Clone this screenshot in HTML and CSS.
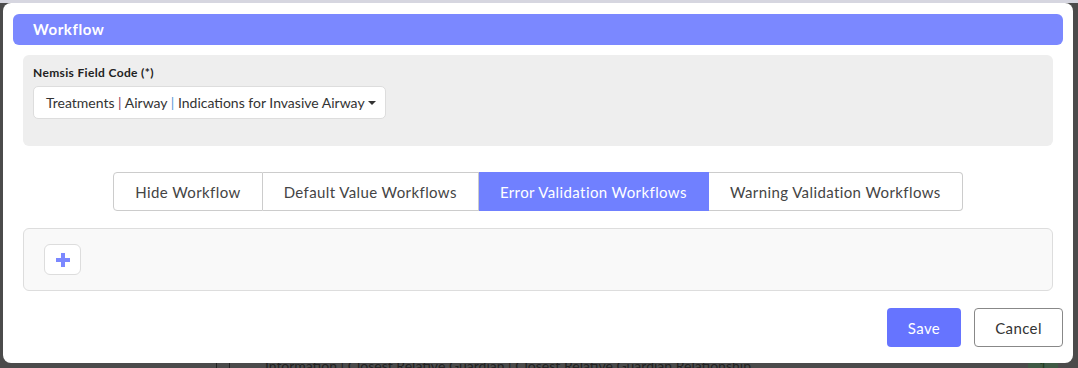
FILE: index.html
```html
<!DOCTYPE html>
<html>

<head>
    <title>Workflow</title>
    <link rel="stylesheet" href="styles.css">
</head>

<body>
    <div class="page">
        <div class="page-top"></div>
        <div class="page-rows">
            <div class="page-row">
                <span class="row-check"></span>
                <span class="row-text">Information | Closest Relative Guardian | Closest Relative Guardian Relationship</span>
                <span class="row-badge">1</span>
            </div>
        </div>
    </div>

    <div class="overlay">
        <div class="modal">
            <div class="modal-header">Workflow</div>
            <div class="modal-body">
                <div class="field-panel">
                    <label class="field-label">Nemsis Field Code (*)</label>
                    <div class="field-select">
                        <span>Treatments <span class="pipe-red">|</span> Airway <span class="pipe-blue">|</span> Indications for Invasive Airway</span>
                        <span class="caret"></span>
                    </div>
                </div>

                <div class="tabs">
                    <button class="tab">Hide Workflow</button>
                    <button class="tab">Default Value Workflows</button>
                    <button class="tab active">Error Validation Workflows</button>
                    <button class="tab">Warning Validation Workflows</button>
                </div>

                <div class="workflow-panel">
                    <button class="add-button">
                        <svg width="14" height="14" viewBox="0 0 14 14">
                            <rect x="5" y="0" width="4" height="14" fill="#7b88ff"></rect>
                            <rect x="0" y="5" width="14" height="4" fill="#7b88ff"></rect>
                        </svg>
                    </button>
                </div>
            </div>
            <div class="modal-footer">
                <button class="btn btn-save">Save</button>
                <button class="btn btn-cancel">Cancel</button>
            </div>
        </div>
    </div>
</body>

</html>
```

FILE: styles.css
```css
* {
    box-sizing: border-box;
}

body {
    margin: 0;
    padding: 0;
    font-family: Lato, "Open Sans", sans-serif;
    background-color: #4b4b4b;
    height: 368px;
    overflow: hidden;
}

.page {
    height: 368px;
    display: flex;
    flex-direction: column;
}

.page-top {
    height: 3px;
    background-color: #d6d6e0;
}

.page-rows {
    flex: 1;
    display: flex;
    flex-direction: column;
    justify-content: flex-end;
}

.page-row {
    display: flex;
    align-items: center;
    height: 22px;
    margin-bottom: -8px;
    padding-left: 216px;
    font-size: 14px;
    color: #222;
}

.row-check {
    width: 14px;
    height: 14px;
    border: 1px solid #222;
    border-radius: 2px;
    margin-right: 35px;
}

.row-text {
    flex: 1;
}

.row-badge {
    width: 30px;
    margin-right: 20px;
    color: #1f3a1f;
    background-color: #3f5a45;
    text-align: center;
}

.overlay {
    position: fixed;
    top: 0;
    left: 0;
    width: 100%;
    height: 100%;
    padding: 3px 5px 0 3px;
}

.modal {
    width: 1070px;
    height: 360px;
    background-color: #fff;
    border-radius: 8px;
    padding: 11px 10px 0 10px;
    display: flex;
    flex-direction: column;
    letter-spacing: 0.35px;
}

.modal-header {
    height: 31px;
    background-color: #7b88ff;
    border-radius: 6px;
    color: #fff;
    font-weight: bold;
    font-size: 15px;
    letter-spacing: 0.6px;
    line-height: 31px;
    padding-left: 20px;
}

.modal-body {
    padding: 10px 10px 0 10px;
}

.field-panel {
    height: 91px;
    background-color: #eeeeee;
    border-radius: 6px;
    padding: 10px 10px 0 10px;
}

.field-label {
    display: block;
    font-size: 12px;
    font-weight: bold;
    color: #222;
    line-height: 16px;
    margin-bottom: 5px;
}

.field-select {
    display: inline-flex;
    align-items: center;
    height: 33px;
    background-color: #fff;
    border: 1px solid #ddd;
    border-radius: 5px;
    padding: 0 9px 0 12px;
    font-size: 14px;
    letter-spacing: 0;
    color: #333;
    white-space: nowrap;
}

.pipe-red {
    color: #8a3a5a;
}

.pipe-blue {
    color: #5a9ad8;
}

.caret {
    margin-left: 3px;
    width: 0;
    height: 0;
    border-left: 4px solid transparent;
    border-right: 4px solid transparent;
    border-top: 4px solid #333;
}

.tabs {
    display: flex;
    justify-content: center;
    margin-top: 26px;
}

.tab {
    height: 39px;
    background-color: #fff;
    border: 1px solid #ccc;
    border-left: none;
    font-family: Lato, "Open Sans", sans-serif;
    font-size: 15px;
    letter-spacing: 0.4px;
    color: #444;
    padding: 0 21px;
    cursor: pointer;
}

.tab:first-child {
    border-left: 1px solid #ccc;
    border-radius: 4px 0 0 4px;
}

.tab:last-child {
    border-radius: 0 4px 4px 0;
}

.tab.active {
    background-color: #7080ff;
    border-color: #7080ff;
    color: #fff;
}

.workflow-panel {
    margin-top: 17px;
    height: 63px;
    background-color: #f9f9f9;
    border: 1px solid #ddd;
    border-radius: 6px;
    padding: 15px 20px;
}

.add-button {
    width: 37px;
    height: 31px;
    background-color: #fff;
    border: 1px solid #ddd;
    border-radius: 6px;
    display: flex;
    align-items: center;
    justify-content: center;
    padding: 0;
    cursor: pointer;
}

.modal-footer {
    display: flex;
    justify-content: flex-end;
    gap: 13px;
    margin-top: 17px;
}

.btn {
    height: 39px;
    border-radius: 4px;
    font-family: Lato, "Open Sans", sans-serif;
    font-size: 15px;
    letter-spacing: 0.4px;
    cursor: pointer;
}

.btn-save {
    width: 74px;
    background-color: #6674ff;
    border: none;
    color: #fff;
}

.btn-cancel {
    width: 89px;
    background-color: #fff;
    border: 1px solid #888;
    color: #333;
}
```
